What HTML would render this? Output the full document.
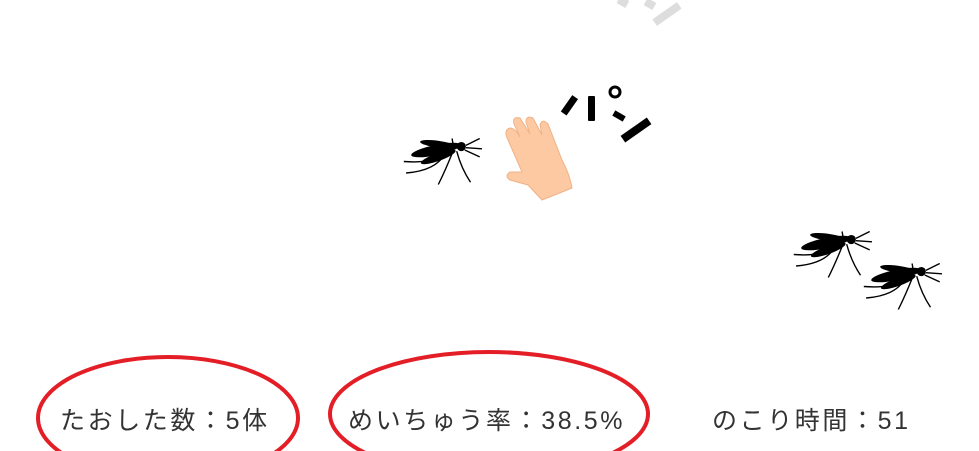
<!DOCTYPE html>
<html><head><meta charset="utf-8"><style>
html,body{margin:0;padding:0;background:#fff;width:979px;height:451px;overflow:hidden;position:relative}
.t{position:absolute;top:404px;font:25px "Liberation Sans","Noto Sans CJK JP",sans-serif;letter-spacing:2.6px;color:#333;white-space:nowrap;line-height:34px}
svg{position:absolute;left:0;top:0}
</style></head><body>
<svg width="979" height="451" viewBox="0 0 979 451">
<defs>
<g id="m">
<ellipse cx="0" cy="0" rx="22" ry="4.5" fill="#000" transform="rotate(-12)"/>
<ellipse cx="2" cy="-5" rx="16" ry="3" fill="#000" transform="rotate(8 2 -5)"/>
<ellipse cx="2" cy="6" rx="16" ry="3.5" fill="#000" transform="rotate(-20 2 6)"/>
<circle cx="22" cy="-3" r="4" fill="#000"/>
<g stroke="#000" stroke-width="1.2" fill="none">
<path d="M26 -4 L38 -10 M26 -2 L40 -1 M25 0 L38 6"/>
<path d="M10 2 Q0 12 -28 10"/>
<path d="M8 3 Q0 18 -26 20"/>
<path d="M14 3 Q8 18 2 30"/>
<path d="M18 1 Q22 16 30 28"/>
<path d="M15 -4 L14 -10"/>
</g>
</g>
</defs>
<g fill="#ddd">
<rect x="618" y="-2" width="10" height="8" transform="rotate(30 623 2)"/>
<rect x="645" y="0" width="10" height="8" transform="rotate(30 650 4)"/>
<rect x="652" y="10" width="30" height="8" transform="rotate(-35 667 14)"/>
</g>
<use href="#m" transform="translate(436,150) scale(1.15)"/>
<use href="#m" transform="translate(826,243) scale(1.15)"/>
<use href="#m" transform="translate(896,275) scale(1.15)"/>
<g fill="#000">
<rect x="566" y="95" width="7" height="20" transform="rotate(35 569 105)"/>
<rect x="588" y="96" width="7" height="25" rx="1"/>
<circle cx="615" cy="92" r="5" fill="none" stroke="#000" stroke-width="3"/>
<rect x="613" y="113" width="12" height="6" transform="rotate(30 619 116)"/>
<rect x="620" y="126" width="32" height="8" transform="rotate(-35 636 130)"/>
</g>
<g fill="#fcc9a2" stroke="#f0b287" stroke-width="1">
<path d="M542 200 L528 185 L510 180 Q504 176 510 172 L522 172 L508 140 Q503 130 510 128 Q515 128 520 137 L514 124 Q512 116 520 118 L530 134 L526 122 Q526 115 533 118 L542 135 L540 125 Q542 118 548 124 L562 160 Q570 175 572 188 Z"/>
</g>
<ellipse cx="168" cy="418" rx="130" ry="61" fill="none" stroke="#e41e26" stroke-width="4"/>
<ellipse cx="489" cy="414" rx="159" ry="62" fill="none" stroke="#e41e26" stroke-width="4"/>
</svg>
<div class="t" style="left:60px">たおした数：5体</div>
<div class="t" style="left:348px">めいちゅう率：38.5%</div>
<div class="t" style="left:712px">のこり時間：51</div>
</body></html>
